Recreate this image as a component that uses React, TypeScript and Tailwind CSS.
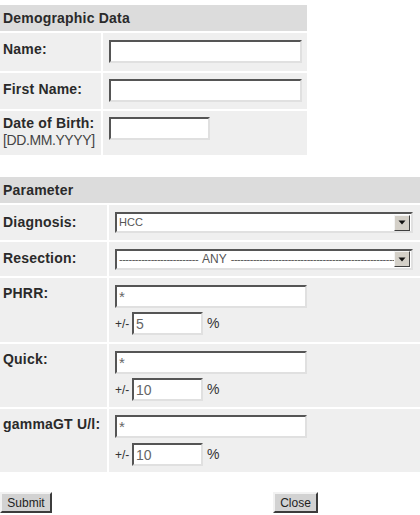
import React from "react";

const font = "font-['Liberation_Sans',Arial,sans-serif]";
const inset =
  "border-2 border-t-[#555555] border-l-[#555555] border-b-[#e0e0e0] border-r-[#e0e0e0] bg-white";
const cellBg = "bg-[#efefef]";
const labelText = "text-[14px] font-bold leading-[16px] text-[#2a2a2a] tracking-[0.2px]";

function TextBox({ w, value, big }: { w: string; value?: string; big?: boolean }) {
  return (
    <div
      className={`${inset} ${w} h-[23px] flex pl-[2px] text-[#666] ${
        big ? "items-center text-[14px]" : "items-start pt-[2px] text-[15px]"
      } leading-none`}
    >
      {value}
    </div>
  );
}

function SelectBox({ children }: { children: React.ReactNode }) {
  return (
    <div className={`${inset} w-[298px] h-[21px] flex items-center overflow-hidden`}>
      <div className="flex-1 overflow-hidden whitespace-nowrap pl-[2px] text-[11px] text-[#555] leading-none">
        {children}
      </div>
      <div className="w-[16px] h-[16px] mr-[1px] bg-[#d4d0c8] border border-t-[#f4f4f4] border-l-[#f4f4f4] border-b-[#404040] border-r-[#404040] flex items-center justify-center">
        <svg width="8" height="5" viewBox="0 0 8 5">
          <path d="M0.5 0.5 L7.5 0.5 L4 4.5 Z" fill="#111" />
        </svg>
      </div>
    </div>
  );
}

function Tolerance({ value }: { value: string }) {
  return (
    <div className="flex items-center">
      <span className="text-[12px] text-[#333] w-[17px]">+/-</span>
      <TextBox w="w-[71px]" value={value} big />
      <span className="ml-[4px] text-[14px] text-[#333]">%</span>
    </div>
  );
}

function ParamRow({
  label,
  tol,
  h,
  pt,
  gap,
}: {
  label: string;
  tol: string;
  h: string;
  pt: string;
  gap: string;
}) {
  return (
    <div className={`flex gap-[2px] ${h}`}>
      <div className={`w-[107px] ${cellBg} pl-[3px] pt-[7px] ${labelText}`}>{label}</div>
      <div className={`flex-1 ${cellBg} pl-[6px] ${pt} flex flex-col ${gap}`}>
        <TextBox w="w-[192px]" value="*" />
        <Tolerance value={tol} />
      </div>
    </div>
  );
}

function Button({ children, w }: { children: React.ReactNode; w: string }) {
  return (
    <div
      className={`${w} h-[21px] bg-[#d2d2d2] border-2 border-t-[#f2f2f2] border-l-[#f2f2f2] border-b-[#3c3c3c] border-r-[#3c3c3c] flex items-center justify-center text-[12px] text-[#222]`}
    >
      {children}
    </div>
  );
}

export default function App() {
  return (
    <div className={`w-[420px] h-[515px] bg-white overflow-hidden ${font}`}>
      {/* Demographic data */}
      <div className="w-[307px] mt-[5px] flex flex-col gap-[2px]">
        <div className={`h-[26px] bg-[#dcdcdc] pl-[3px] flex items-center ${labelText}`}>
          Demographic Data
        </div>
        <div className="flex gap-[2px] h-[38px]">
          <div className={`w-[101px] ${cellBg} pl-[3px] pt-[8px] ${labelText}`}>Name:</div>
          <div className={`flex-1 ${cellBg} pl-[6px] pt-[7px]`}>
            <TextBox w="w-[193px]" />
          </div>
        </div>
        <div className="flex gap-[2px] h-[36px]">
          <div className={`w-[101px] ${cellBg} pl-[3px] pt-[8px] ${labelText}`}>First Name:</div>
          <div className={`flex-1 ${cellBg} pl-[6px] pt-[6px]`}>
            <TextBox w="w-[193px]" />
          </div>
        </div>
        <div className="flex gap-[2px] h-[44px]">
          <div className={`w-[101px] ${cellBg} pl-[3px] pt-[4px]`}>
            <div className={labelText}>Date of Birth:</div>
            <div className="text-[14px] leading-[18px] text-[#444] tracking-[-0.4px]">[DD.MM.YYYY]</div>
          </div>
          <div className={`flex-1 ${cellBg} pl-[6px] pt-[6px]`}>
            <TextBox w="w-[101px]" />
          </div>
        </div>
      </div>

      {/* Search parameters */}
      <div className="w-[420px] mt-[22px] flex flex-col gap-[2px]">
        <div className={`h-[26px] bg-[#dcdcdc] pl-[3px] flex items-center ${labelText}`}>
          Parameter
        </div>
        <div className="flex gap-[2px] h-[35px]">
          <div className={`w-[107px] ${cellBg} pl-[3px] pt-[9px] ${labelText}`}>Diagnosis:</div>
          <div className={`flex-1 ${cellBg} pl-[6px] flex items-center`}>
            <SelectBox>HCC</SelectBox>
          </div>
        </div>
        <div className="flex gap-[2px] h-[34px]">
          <div className={`w-[107px] ${cellBg} pl-[3px] pt-[8px] ${labelText}`}>Resection:</div>
          <div className={`flex-1 ${cellBg} pl-[6px] flex items-center`}>
            <SelectBox>
              <span className="tracking-[-0.5px]">-------------------------</span>
              <span className="text-[12px] mx-[4px]">ANY</span>
              <span className="tracking-[-0.5px]">
                ----------------------------------------------------
              </span>
            </SelectBox>
          </div>
        </div>
        <ParamRow label="PHRR:" tol="5" h="h-[64px]" pt="pt-[7px]" gap="gap-[4px]" />
        <ParamRow label="Quick:" tol="10" h="h-[63px]" pt="pt-[7px]" gap="gap-[4px]" />
        <ParamRow label="gammaGT U/l:" tol="10" h="h-[63px]" pt="pt-[6px]" gap="gap-[5px]" />
      </div>

      <div className="w-[318px] mt-[20px] flex justify-between">
        <Button w="w-[52px]">Submit</Button>
        <Button w="w-[45px]">Close</Button>
      </div>
    </div>
  );
}
